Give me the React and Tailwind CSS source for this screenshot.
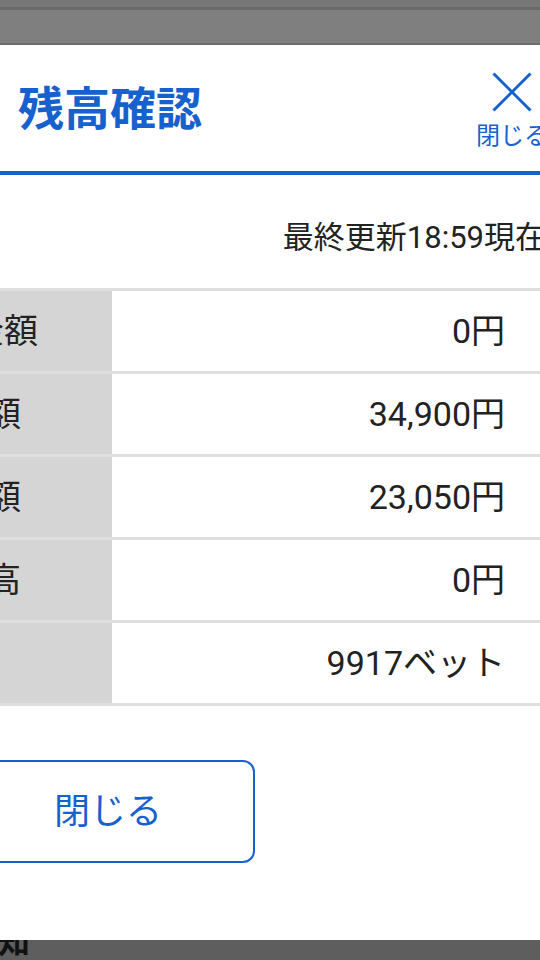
import React from 'react';

const rows = [
  { label: '払戻金額', value: '0円' },
  { label: '入金額', value: '34,900円' },
  { label: '購入額', value: '23,050円' },
  { label: '総残高', value: '0円' },
  { label: '数', value: '9917ベット' },
];

const CloseIcon = () => (
  <svg width="40" height="40" viewBox="0 0 40 40" fill="none" stroke="#1761cf" strokeWidth="3">
    <line x1="1.5" y1="1.5" x2="38.5" y2="38.5" />
    <line x1="38.5" y1="1.5" x2="1.5" y2="38.5" />
  </svg>
);

export default function App() {
  return (
    <div
      className="w-[540px] h-[960px] overflow-hidden flex flex-col bg-white text-[#222]"
      style={{ fontFamily: 'Roboto, "Noto Sans CJK JP", sans-serif' }}
    >
      {/* dimmed page behind the modal */}
      <div className="h-[7px] bg-[#777777]" />
      <div className="h-[3px] bg-[#6a6a6a]" />
      <div className="h-[33px] bg-[#7f7f7f]" />
      <div className="h-[2px] bg-[#6c6c6c]" />

      {/* header */}
      <div className="h-[126px] flex items-center justify-between">
        <h1 className="pl-[18px] text-[46px] leading-none font-bold text-[#1761cf] whitespace-nowrap pt-[2px]">
          残高確認
        </h1>
        <button className="flex flex-col items-center mr-[-8px] pt-[4px] text-[#1761cf]">
          <CloseIcon />
          <span className="text-[24px] leading-none mt-[12px] whitespace-nowrap">閉じる</span>
        </button>
      </div>
      <div className="h-[4px] bg-[#1761cf]" />

      {/* last update */}
      <div className="flex justify-end pt-[47px] pb-[34px]">
        <span className="text-[31px] leading-[32px] whitespace-nowrap mr-[-6px]">最終更新18:59現在</span>
      </div>

      {/* balance table */}
      <div className="border-t-[3px] border-[#dfdfdf]">
        {rows.map((r) => (
          <div key={r.value + r.label} className="flex h-[83px] border-b-[3px] border-[#dfdfdf]">
            <div className="w-[112px] overflow-hidden bg-[#d5d5d5] flex items-center">
              <div className="w-[284px] ml-[-172px] shrink-0 text-center text-[34px] leading-none whitespace-nowrap">
                {r.label}
              </div>
            </div>
            <div className="flex-1 flex items-center justify-end pr-[35px] text-[34px] leading-none whitespace-nowrap">
              {r.value}
            </div>
          </div>
        ))}
      </div>

      {/* footer button */}
      <div className="flex mt-[54px]">
        <button className="ml-[-39px] w-[294px] h-[103px] shrink-0 border-2 border-[#1761cf] rounded-[12px] text-[36px] leading-none text-[#1761cf]">
          閉じる
        </button>
      </div>

      <div className="flex-1" />

      {/* page behind, bottom */}
      <div className="h-[20px] bg-[#5e5e5e] overflow-hidden flex items-start">
        <span className="ml-[-34px] mt-[-14px] text-[32px] leading-none font-bold text-[#111] whitespace-nowrap">
          通知
        </span>
      </div>
    </div>
  );
}
